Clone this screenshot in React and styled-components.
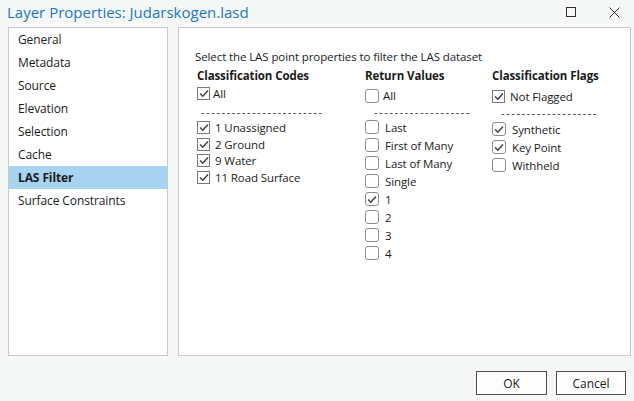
import React from 'react';
import styled, { createGlobalStyle } from 'styled-components';

const GlobalStyle = createGlobalStyle`
  html, body { margin: 0; padding: 0; }
  body {
    font-family: "Open Sans", "Noto Sans", "Liberation Sans", sans-serif;
    font-size: 11.5px;
    letter-spacing: -0.1px;
    color: #1b1b1b;
    background: #f6f7f7;
  }
`;

const Dialog = styled.div`
  width: 634px;
  height: 401px;
  background: #f6f7f7;
  display: flex;
  flex-direction: column;
`;

const TitleBar = styled.div`
  height: 27px;
  display: flex;
  align-items: flex-start;
  padding: 0 14px 0 7px;
  box-sizing: border-box;
`;

const Title = styled.div`
  flex: 1;
  font-size: 15px;
  letter-spacing: 0;
  line-height: 24px;
  color: #2178be;
`;

const WinButton = styled.div`
  display: flex;
  margin-top: 7px;
  margin-left: ${p => p.$gap || 0}px;
`;

const Body = styled.div`
  display: flex;
  gap: 10px;
  padding: 0 8px;
  height: 329px;
`;

const NavList = styled.div`
  flex: none;
  width: 160px;
  background: #fff;
  border: 1px solid #c9c9c9;
  box-sizing: border-box;
`;

const NavItem = styled.div`
  height: 23px;
  line-height: 23px;
  padding-left: 9px;
  font-size: 12px;
  background: ${p => (p.$active ? '#a8d4f1' : 'transparent')};
  font-weight: ${p => (p.$active ? 700 : 400)};
`;

const Panel = styled.div`
  flex: 1;
  background: #fff;
  border: 1px solid #c9c9c9;
  box-sizing: border-box;
  padding: 20px 0 0 16px;
`;

const Intro = styled.div`
  height: 18px;
  line-height: 18px;
`;

const Columns = styled.div`
  display: flex;
  margin-top: 1px;
`;

const Column = styled.div`
  flex: none;
  width: ${p => p.$width}px;
  display: flex;
  flex-direction: column;
`;

const Heading = styled.div`
  font-weight: 700;
  height: 18px;
  line-height: 18px;
  margin-left: 2px;
`;

const Row = styled.label`
  display: flex;
  align-items: center;
  height: ${p => p.$h}px;
  gap: ${p => p.$gap}px;
  margin-left: 2px;
`;

const Box = styled.span`
  width: ${p => (p.$round ? 14 : 13)}px;
  height: ${p => (p.$round ? 14 : 13)}px;
  box-sizing: border-box;
  border: 1px solid ${p => (p.$round ? '#8c8c8c' : '#7a7a7a')};
  border-radius: ${p => (p.$round ? 3 : 0)}px;
  background: #fff;
  display: flex;
  align-items: center;
  justify-content: center;
  flex: none;
`;

const Dashes = styled.div`
  height: ${p => p.$h}px;
  line-height: ${p => p.$lh}px;
  padding-left: ${p => p.$indent}px;
  letter-spacing: 1.4px;
  color: #333;
  white-space: nowrap;
`;

const Footer = styled.div`
  flex: 1;
  display: flex;
  justify-content: flex-end;
  align-items: flex-start;
  gap: 9px;
  padding: 15px 8px 0 0;
`;

const Button = styled.button`
  width: ${p => p.$width}px;
  height: 24px;
  background: #fdfdfd;
  border: 1px solid #4f4f4f;
  font-family: inherit;
  font-size: 12px;
  color: #1b1b1b;
  padding: 0;
`;

const Check = () => (
  <svg width="10" height="9" viewBox="0 0 10 9">
    <polyline points="1,4.5 3.8,7.2 9,1.5" fill="none" stroke="#3d3d3d" strokeWidth="1.4" />
  </svg>
);

const CheckRow = ({ label, checked, round, h, gap }) => (
  <Row $h={h} $gap={gap}>
    <Box $round={round}>{checked && <Check />}</Box>
    <span>{label}</span>
  </Row>
);

const navItems = ['General', 'Metadata', 'Source', 'Elevation', 'Selection', 'Cache', 'LAS Filter', 'Surface Constraints'];

const codes = [
  ['1 Unassigned', true],
  ['2 Ground', true],
  ['9 Water', true],
  ['11 Road Surface', true],
];

const returns = [
  ['Last', false],
  ['First of Many', false],
  ['Last of Many', false],
  ['Single', false],
  ['1', true],
  ['2', false],
  ['3', false],
  ['4', false],
];

const flags = [
  ['Synthetic', true],
  ['Key Point', true],
  ['Withheld', false],
];

export default function App() {
  return (
    <>
      <GlobalStyle />
      <Dialog>
        <TitleBar>
          <Title>Layer Properties: Judarskogen.lasd</Title>
          <WinButton>
            <svg width="10" height="10" viewBox="0 0 10 10">
              <rect x="0.5" y="0.5" width="9" height="9" fill="none" stroke="#333" strokeWidth="1" />
            </svg>
          </WinButton>
          <WinButton $gap={33}>
            <svg width="11" height="11" viewBox="0 0 11 11">
              <path d="M0.5 0.5 L10.5 10.5 M10.5 0.5 L0.5 10.5" stroke="#333" strokeWidth="1" />
            </svg>
          </WinButton>
        </TitleBar>
        <Body>
          <NavList>
            {navItems.map(n => (
              <NavItem key={n} $active={n === 'LAS Filter'}>{n}</NavItem>
            ))}
          </NavList>
          <Panel>
            <Intro>Select the LAS point properties to filter the LAS dataset</Intro>
            <Columns>
              <Column $width={168}>
                <Heading>Classification Codes</Heading>
                <CheckRow label="All" checked h={16} gap={3} />
                <Dashes $indent={6} $h={18} $lh={22}>------------------------</Dashes>
                {codes.map(([l, c]) => (
                  <CheckRow key={l} label={l} checked={c} h={16.7} gap={5} />
                ))}
              </Column>
              <Column $width={127}>
                <Heading>Return Values</Heading>
                <CheckRow label="All" round h={21} gap={4} />
                <Dashes $indent={11} $h={12} $lh={12}>-------------------</Dashes>
                {returns.map(([l, c]) => (
                  <CheckRow key={l} label={l} checked={c} round h={18} gap={6} />
                ))}
              </Column>
              <Column $width={140}>
                <Heading>Classification Flags</Heading>
                <CheckRow label="Not Flagged" checked h={23} gap={5} />
                <Dashes $indent={11} $h={12} $lh={9}>-------------------</Dashes>
                {flags.map(([l, c]) => (
                  <CheckRow key={l} label={l} checked={c} round h={18} gap={6} />
                ))}
              </Column>
            </Columns>
          </Panel>
        </Body>
        <Footer>
          <Button $width={71}>OK</Button>
          <Button $width={70}>Cancel</Button>
        </Footer>
      </Dialog>
    </>
  );
}
